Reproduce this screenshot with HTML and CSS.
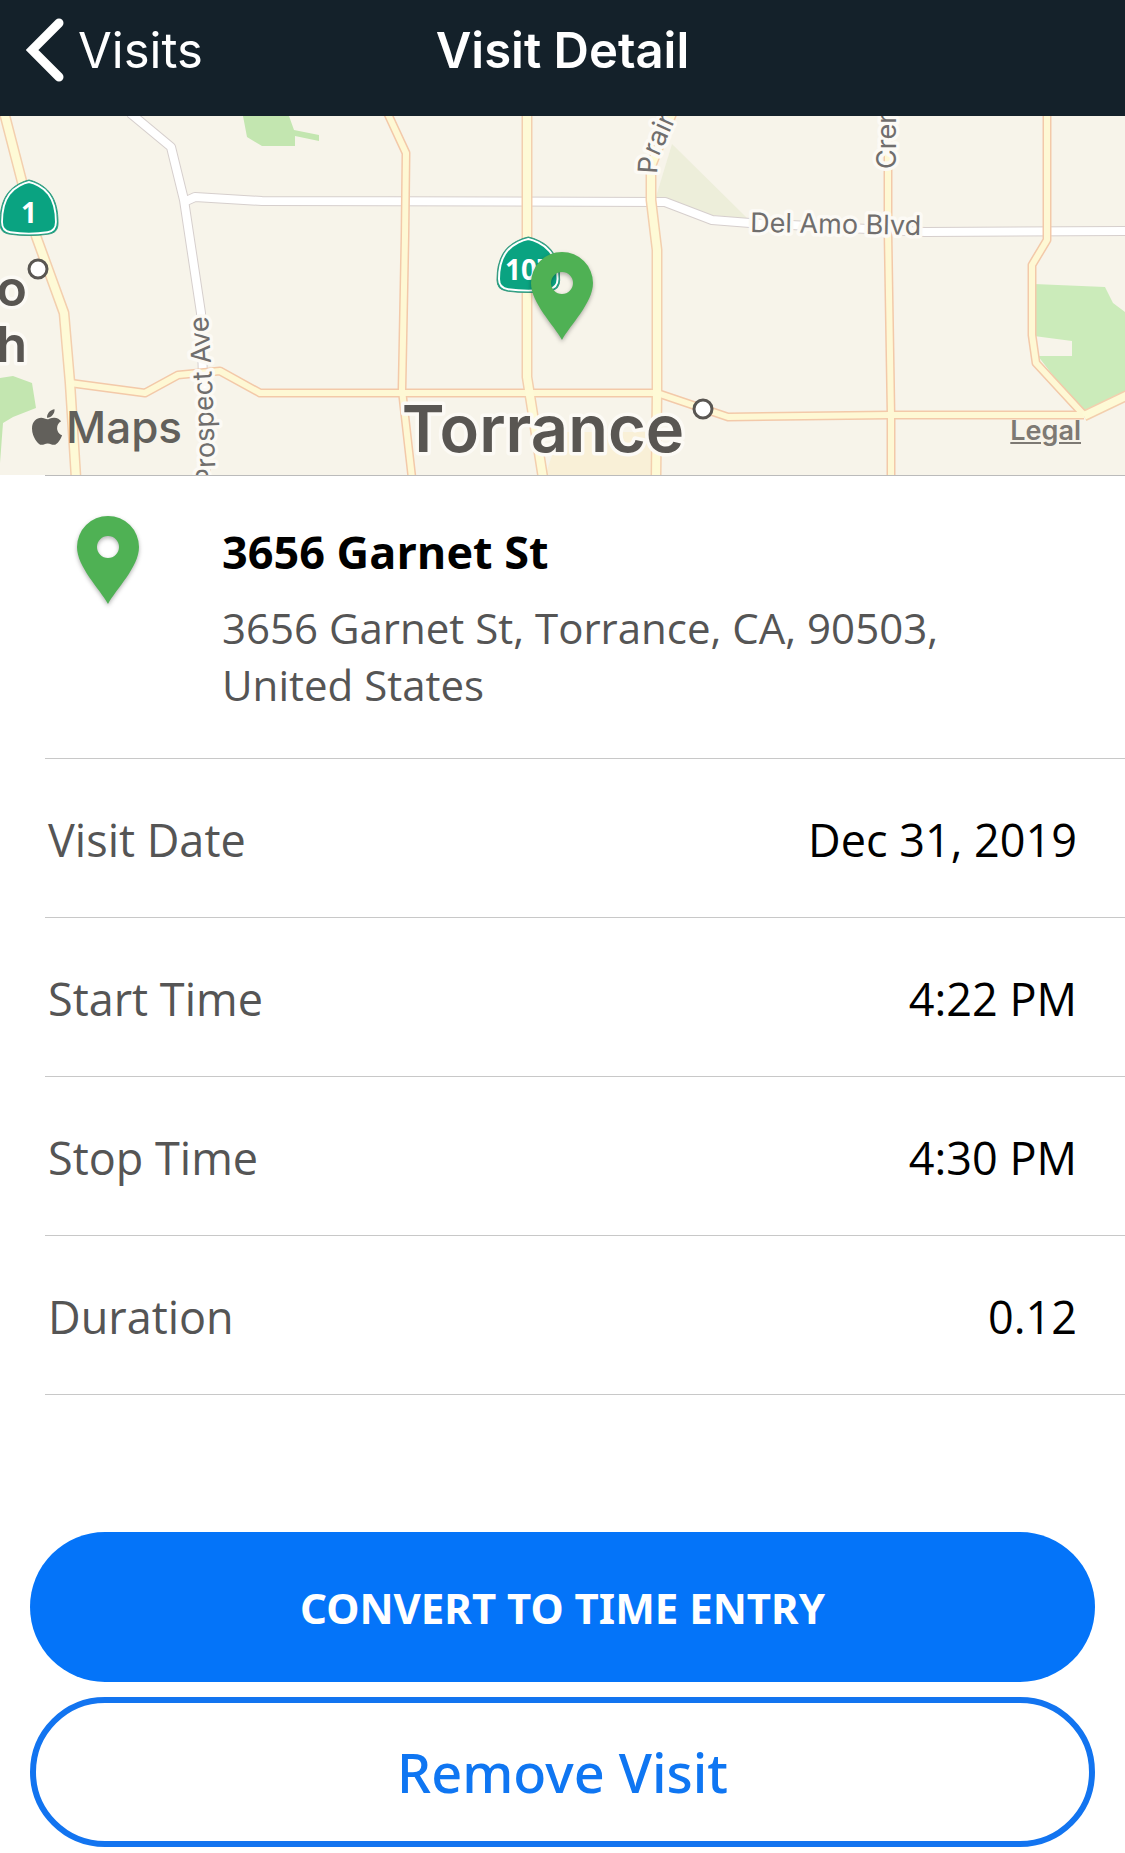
FILE: index.html
```html
<!DOCTYPE html>
<html lang="en">
<head>
    <meta charset="UTF-8">
    <meta name="viewport" content="width=device-width, initial-scale=1.0">
    <title>Visit Detail</title>
    <link rel="stylesheet" href="styles.css">
</head>
<body>
    <header class="navbar">
        <a href="#visits" class="back-link">
            <svg class="back-icon" viewBox="0 0 38 64" aria-hidden="true">
                <path d="M33 5 L6 32 L33 59"/>
            </svg>
            Visits
        </a>
        <h1>Visit Detail</h1>
    </header>

    <div class="map">
        <svg class="map-canvas" viewBox="0 0 1125 359" preserveAspectRatio="xMidYMid slice" role="img" aria-label="Map of Torrance">
            <defs>
                <path id="pin" fill-rule="evenodd" d="M31 88 C23 73 0 51 0 31 A31 31 0 0 1 62 31 C62 51 39 73 31 88 Z M31 20 A11 11 0 1 0 31 42 A11 11 0 1 0 31 20 Z"/>
                <path id="shield" d="M29 0 C34 1 44 5 50 13 C56 21 58 31 58 43 C58 50 55 53 49 54 C36 56 22 56 9 54 C3 53 0 50 0 43 C0 31 2 21 8 13 C14 5 24 1 29 0 Z"/>
                <path id="prairie" d="M657 58 L658 42 L688 -24"/>
                <path id="prospect" d="M217 402 L212 262 L208 200"/>
                <g id="white-roads">
                    <path d="M130 -3 L171 31 L184 84 L201 197 L206 362"/>
                    <path d="M184 86 L195 81 L262 85 L665 86 L712 104 L750 107 L925 116 L1128 115"/>
                </g>
                <g id="yellow-roads">
                    <path d="M387 -4 L406 37 L405 120 L402 274 L412 362"/>
                    <path d="M1047 -3 L1047 124 L1032 149 L1032 219 L1036 247 L1084 299"/>
                    <path d="M70 267 L145 277 L178 259 L220 255 L260 277 L657 277 L728 301 L890 299 L1084 299"/>
                    <path d="M888 -3 L888 117 L891 299 L891 362"/>
                </g>
                <g id="highways">
                    <path d="M4 -4 L36 120 L64 197 L70 267 L76 362"/>
                    <path d="M527 -3 L527 261 L543 362"/>
                    <path d="M672 -3 L651 50 L651 84 L657 134 L657 277 L656 362"/>
                    <path d="M1084 300 L1128 279"/>
                </g>
            </defs>

            <!-- parks and blocks -->
            <rect class="land" width="1125" height="359"/>
            <path class="park" d="M243 0 L247 21 L262 30 L295 30 L295 20 L319 25 L319 19 L294 14 L289 0 Z"/>
            <path class="park" d="M0 262 L13 260 L32 267 L36 292 L13 301 L3 307 L0 347 Z"/>
            <path class="park light" d="M1034 168 L1105 171 L1113 187 L1125 196 L1125 280 L1084 300 L1038 240 H1072 V225 L1034 220 Z"/>
            <path class="field" d="M672 28 L748 103 L712 99 L655 84 Z"/>
            <path class="block" d="M560 316 H652 V360 H545 Z"/>

            <!-- roads, casing first then fill -->
            <use href="#white-roads" class="road white-casing"/>
            <use href="#white-roads" class="road white-fill"/>
            <use href="#yellow-roads" class="road yellow-casing"/>
            <use href="#highways" class="road highway-casing"/>
            <use href="#yellow-roads" class="road yellow-fill"/>
            <use href="#highways" class="road highway-fill"/>

            <!-- road names -->
            <text class="street"><textPath href="#prairie">Prair</textPath></text>
            <text class="street"><textPath href="#prospect" startOffset="100%" text-anchor="end">Prospect Ave</textPath></text>
            <text class="street" transform="translate(896 53) rotate(-90)">Cren</text>
            <text class="street" transform="translate(750 116) rotate(1)">Del Amo Blvd</text>

            <!-- towns -->
            <text class="town" x="27" y="190" text-anchor="end">o</text>
            <text class="town" x="27" y="246" text-anchor="end">h</text>
            <text class="city" x="543" y="336" text-anchor="middle">Torrance</text>
            <circle class="dot" cx="38" cy="153" r="9"/>
            <circle class="dot" cx="703" cy="293" r="9"/>

            <!-- highway shields -->
            <g transform="translate(0 64)">
                <use href="#shield" class="shield"/>
                <use href="#shield" class="shield-line" transform="translate(2 2) scale(.93)"/>
                <text class="shield-text" x="29" y="43" text-anchor="middle">1</text>
            </g>
            <g transform="translate(497 121)">
                <use href="#shield" class="shield" transform="scale(1.08 1)"/>
                <use href="#shield" class="shield-line" transform="translate(2 2) scale(1.01 .93)"/>
                <text class="shield-text" x="32" y="43" text-anchor="middle">107</text>
            </g>

            <use href="#pin" class="pin" x="531" y="136"/>
        </svg>
        <div class="map-brand">
            <svg class="apple" viewBox="4 32 376 448" aria-hidden="true">
                <path d="M318.7 268.7c-.2-36.7 16.4-64.4 50-84.8-18.8-26.9-47.2-41.7-84.7-44.6-35.5-2.8-74.3 20.7-88.5 20.7-15 0-49.4-19.7-76.4-19.7C63.3 141.2 4 184.8 4 273.5q0 39.3 14.4 81.2c12.8 36.7 59 126.7 107.2 125.2 25.2-.6 43-17.9 75.8-17.9 31.8 0 48.3 17.9 76.4 17.9 48.6-.7 90.4-82.5 102.6-119.3-65.2-30.7-61.7-90-61.7-91.9zm-56.6-164.2c27.3-32.4 24.8-61.9 24-72.5-24.1 1.4-52 16.4-67.9 34.9-17.5 19.8-27.8 44.3-25.6 71.9 26.1 2 49.9-11.4 69.5-34.3z"/>
            </svg>
            Maps
        </div>
        <a href="#legal" class="map-legal">Legal</a>
    </div>

    <main>
        <section class="place">
            <svg class="place-icon" viewBox="0 0 62 88" aria-hidden="true">
                <use href="#pin" class="pin"/>
            </svg>
            <div class="place-text">
                <h2>3656 Garnet St</h2>
                <p>3656 Garnet St, Torrance, CA, 90503, United States</p>
            </div>
        </section>

        <dl class="details">
            <div class="row">
                <dt>Visit Date</dt>
                <dd>Dec 31, 2019</dd>
            </div>
            <div class="row">
                <dt>Start Time</dt>
                <dd>4:22 PM</dd>
            </div>
            <div class="row">
                <dt>Stop Time</dt>
                <dd>4:30 PM</dd>
            </div>
            <div class="row">
                <dt>Duration</dt>
                <dd>0.12</dd>
            </div>
        </dl>

        <div class="actions">
            <button type="button" class="btn btn-primary">CONVERT TO TIME ENTRY</button>
            <button type="button" class="btn btn-outline">Remove Visit</button>
        </div>
    </main>
</body>
</html>
```
FILE: styles.css
```css
* {
    box-sizing: border-box;
}
body {
    margin: 0;
    background-color: #fff;
    color: #000;
    font-family: "Open Sans", "Noto Sans", sans-serif;
}

/* top bar */
.navbar {
    display: grid;
    grid-template-columns: 1fr auto 1fr;
    align-items: center;
    height: 116px;
    padding: 0 26px 16px;
    background-color: #14212a;
    color: #fff;
    font-family: Inter, sans-serif;
    font-size: 49px;
}
.navbar h1 {
    margin: 0;
    font-size: 49px;
    font-weight: 600;
}
.back-link {
    display: flex;
    align-items: center;
    gap: 14px;
    color: #fff;
    text-decoration: none;
}
.back-icon {
    width: 38px;
    height: 64px;
    fill: none;
    stroke: #fff;
    stroke-width: 9;
    stroke-linecap: round;
}

/* map */
.map {
    position: relative;
    height: 359px;
    overflow: hidden;
    font-family: Inter, sans-serif;
}
.map-canvas {
    display: block;
    width: 100%;
    height: 100%;
}
.land {
    fill: #f7f4ea;
}
.park {
    fill: #c3e6b0;
}
.park.light {
    fill: #cbebba;
}
.field {
    fill: #edeeda;
}
.block {
    fill: #f9f0d7;
}
.road {
    fill: none;
    stroke-linejoin: round;
}
.white-casing {
    stroke: #d6cfcd;
    stroke-width: 10px;
}
.white-fill {
    stroke: #fff;
    stroke-width: 8px;
}
.yellow-casing {
    stroke: #f3c9a9;
    stroke-width: 9px;
}
.yellow-fill {
    stroke: #fef8d4;
    stroke-width: 6px;
}
.highway-casing {
    stroke: #f3cfae;
    stroke-width: 11px;
}
.highway-fill {
    stroke: #fefad6;
    stroke-width: 8px;
}
.street,
.town,
.city {
    paint-order: stroke;
    stroke: #fcfaf5;
    stroke-width: 7px;
    stroke-linejoin: round;
}
.street {
    fill: #706e6d;
    font-size: 27px;
}
.town {
    fill: #595652;
    font-size: 50px;
    font-weight: 600;
}
.city {
    fill: #595652;
    font-size: 65px;
    font-weight: 600;
}
.dot {
    fill: #fff;
    stroke: #595652;
    stroke-width: 3px;
}
.shield {
    fill: #0aa381;
    stroke: #3d9a80;
    stroke-width: 1px;
}
.shield-line {
    fill: none;
    stroke: #fff;
    stroke-width: 2px;
}
.shield-text {
    fill: #fff;
    font-family: "Noto Sans", sans-serif;
    font-size: 28px;
    font-weight: 700;
}
.pin {
    fill: #4fb154;
    filter: drop-shadow(0 2px 2px rgba(0,0,0,0.3));
}
.map-brand {
    position: absolute;
    left: 32px;
    bottom: 21px;
    display: flex;
    align-items: center;
    gap: 4px;
    color: #62605b;
    font-size: 44px;
    font-weight: 500;
}
.apple {
    width: 30px;
    height: 36px;
    fill: #62605b;
}
.map-legal {
    position: absolute;
    right: 44px;
    bottom: 28px;
    color: #7d7973;
    font-size: 27px;
    font-weight: 600;
}

/* place */
.place {
    display: flex;
    gap: 83px;
    margin-left: 45px;
    padding: 40px 90px 45px 32px;
    border-top: 1px solid #bbb;
    border-bottom: 1px solid #c8c8c8;
}
.place-icon {
    flex: none;
    width: 62px;
    height: 88px;
    overflow: visible;
}
.place-text {
    padding-top: 6px;
}
.place-text h2 {
    margin: 0 0 17px;
    font-size: 45px;
    line-height: 60px;
}
.place-text p {
    margin: 0;
    color: #555;
    font-size: 42px;
    line-height: 57px;
}

/* rows */
.details {
    margin: 0 0 0 45px;
    font-size: 45px;
}
.row {
    display: flex;
    justify-content: space-between;
    align-items: center;
    height: 159px;
    padding: 2px 48px 0 3px;
    border-bottom: 1px solid #c8c8c8;
}
.row dt {
    color: #555;
}
.row dd {
    margin: 0;
}

/* buttons */
.actions {
    display: flex;
    flex-direction: column;
    gap: 15px;
    padding: 137px 30px 6px;
}
.btn {
    width: 100%;
    height: 150px;
    border-radius: 75px;
    font-family: "Noto Sans", sans-serif;
    cursor: pointer;
}
.btn-primary {
    border: none;
    background-color: #0474f9;
    color: #fff;
    font-size: 42px;
    font-weight: 700;
}
.btn-outline {
    border: 6px solid #1274f0;
    background-color: #fff;
    color: #0f76f2;
    font-size: 54px;
    font-weight: 500;
}
```
